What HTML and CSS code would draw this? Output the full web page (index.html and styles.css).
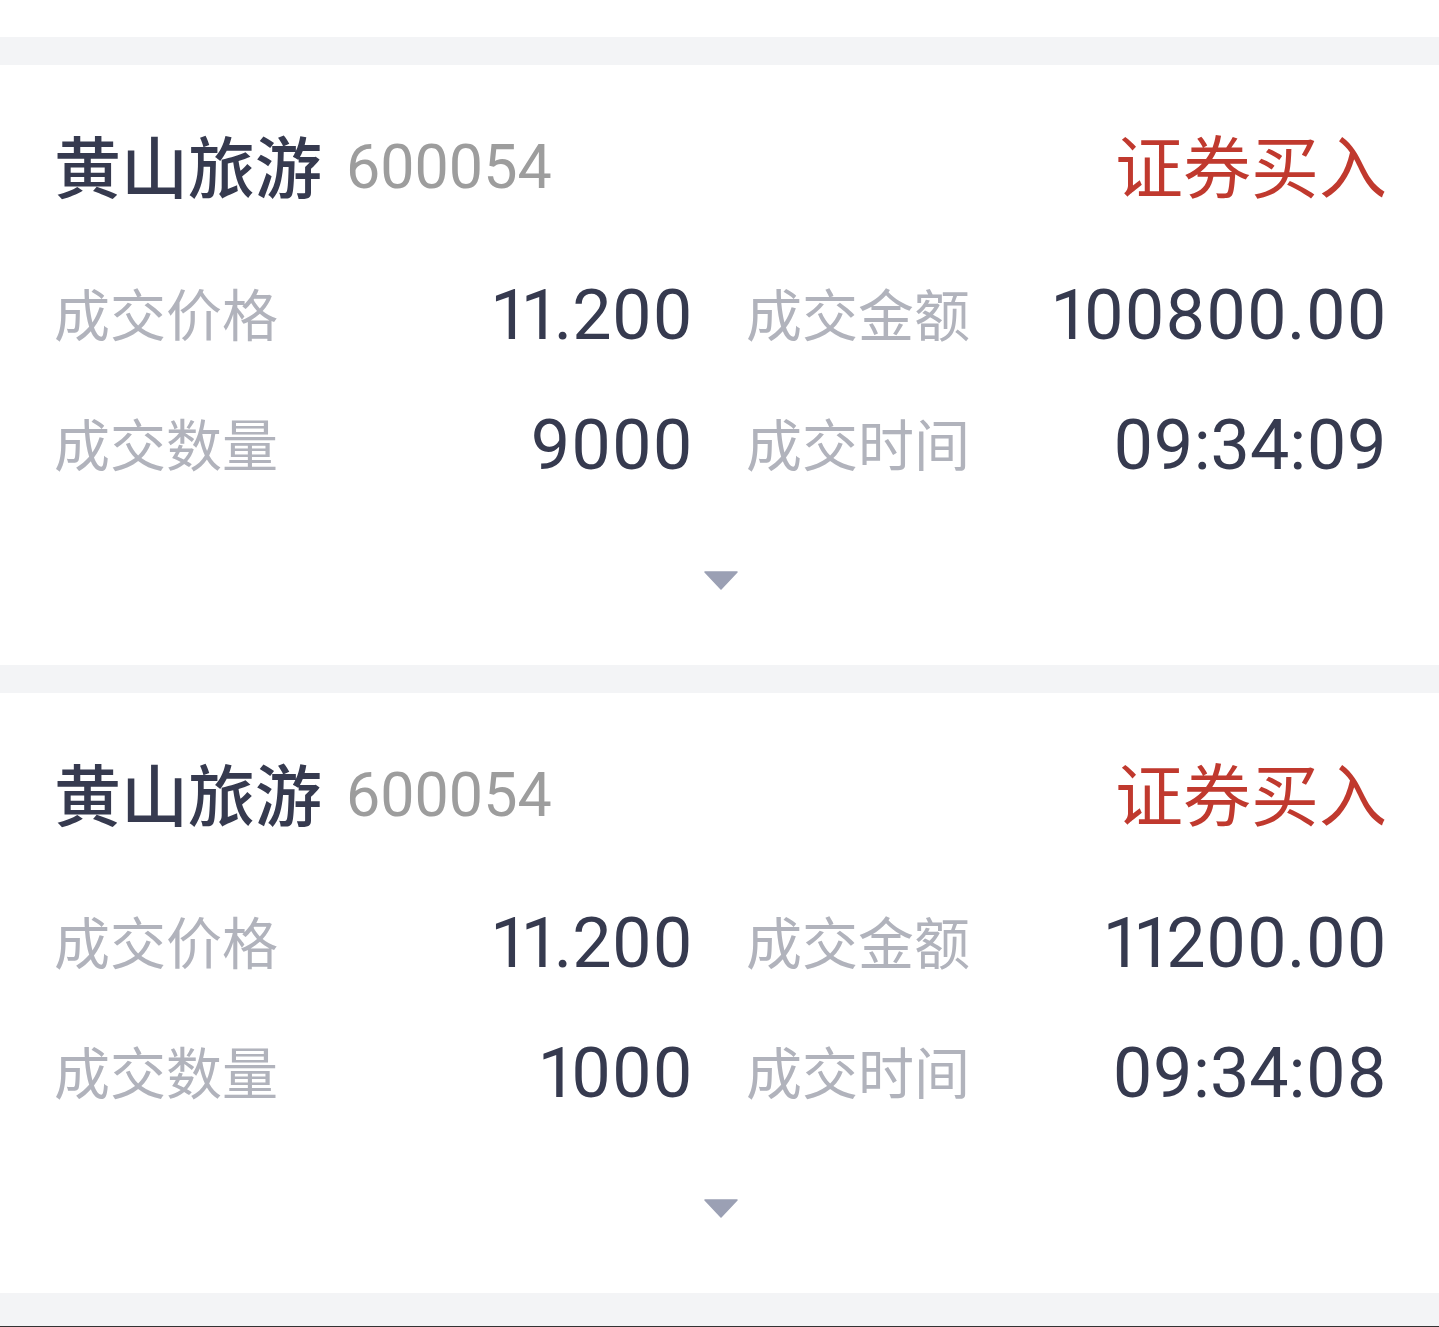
FILE: index.html
```html
<!DOCTYPE html>
<html lang="zh-CN">

<head>
    <meta charset="UTF-8">
    <title>成交明细</title>
    <link rel="stylesheet" href="styles.css">
</head>

<body>

    <div class="top-space"></div>
    <div class="gap"></div>

    <!-- 成交记录 1 -->
    <div class="card">
        <div class="card-head">
            <div class="stock">
                <span class="stock-name">黄山旅游</span>
                <span class="stock-code">600054</span>
            </div>
            <span class="trade-type">证券买入</span>
        </div>
        <div class="grid">
            <div class="cell"><span class="label">成交价格</span><span class="value">11.200</span></div>
            <div class="cell"><span class="label">成交金额</span><span class="value">100800.00</span></div>
            <div class="cell"><span class="label">成交数量</span><span class="value">9000</span></div>
            <div class="cell"><span class="label">成交时间</span><span class="value">09:34:09</span></div>
        </div>
        <div class="more">
            <svg width="34" height="20" viewBox="0 0 34 20">
                <polygon points="1 1, 33 1, 17 18" fill="#9ba0b4" stroke="#9ba0b4" stroke-width="1.5" stroke-linejoin="round" />
            </svg>
        </div>
    </div>

    <div class="gap"></div>

    <!-- 成交记录 2 -->
    <div class="card">
        <div class="card-head">
            <div class="stock">
                <span class="stock-name">黄山旅游</span>
                <span class="stock-code">600054</span>
            </div>
            <span class="trade-type">证券买入</span>
        </div>
        <div class="grid">
            <div class="cell"><span class="label">成交价格</span><span class="value">11.200</span></div>
            <div class="cell"><span class="label">成交金额</span><span class="value">11200.00</span></div>
            <div class="cell"><span class="label">成交数量</span><span class="value">1000</span></div>
            <div class="cell"><span class="label">成交时间</span><span class="value">09:34:08</span></div>
        </div>
        <div class="more">
            <svg width="34" height="20" viewBox="0 0 34 20">
                <polygon points="1 1, 33 1, 17 18" fill="#9ba0b4" stroke="#9ba0b4" stroke-width="1.5" stroke-linejoin="round" />
            </svg>
        </div>
    </div>

    <div class="gap last"></div>

</body>

</html>
```

FILE: styles.css
```css
body {
    margin: 0;
    padding: 0;
    background-color: #ffffff;
    font-family: Roboto, "Noto Sans CJK SC", sans-serif;
    overflow: hidden;
}

.top-space {
    height: 37px;
}

.gap {
    height: 28px;
    background-color: #f3f4f6;
}

.gap.last {
    height: 33px;
    border-bottom: 1px solid #333333;
}

.card {
    height: 600px;
    box-sizing: border-box;
    padding: 58px 52px 0 54px;
    background-color: #ffffff;
}

.card-head {
    display: flex;
    justify-content: space-between;
    align-items: center;
    height: 80px;
}

.stock {
    display: flex;
    align-items: center;
    gap: 24px;
}

.stock-name {
    font-family: "Noto Sans CJK SC", sans-serif;
    font-size: 67px;
    font-weight: 500;
    color: #363a4f;
}

.stock-code {
    font-size: 61px;
    color: #9d9d9d;
    padding-top: 8px;
}

.trade-type {
    font-family: "Noto Sans CJK SC", sans-serif;
    font-size: 68px;
    color: #c0392e;
}

.grid {
    display: grid;
    grid-template-columns: 639px 641px;
    column-gap: 53px;
    row-gap: 50px;
    margin-top: 72px;
}

.cell {
    display: flex;
    justify-content: space-between;
    align-items: center;
    height: 80px;
}

.label {
    font-family: "Noto Sans CJK SC", sans-serif;
    font-size: 56px;
    color: #b1b3bc;
    margin-top: -8px;
}

.value {
    font-size: 70px;
    font-variant-numeric: proportional-nums;
    color: #363a4f;
}

.more {
    display: flex;
    justify-content: center;
    margin-top: 86px;
}
```
